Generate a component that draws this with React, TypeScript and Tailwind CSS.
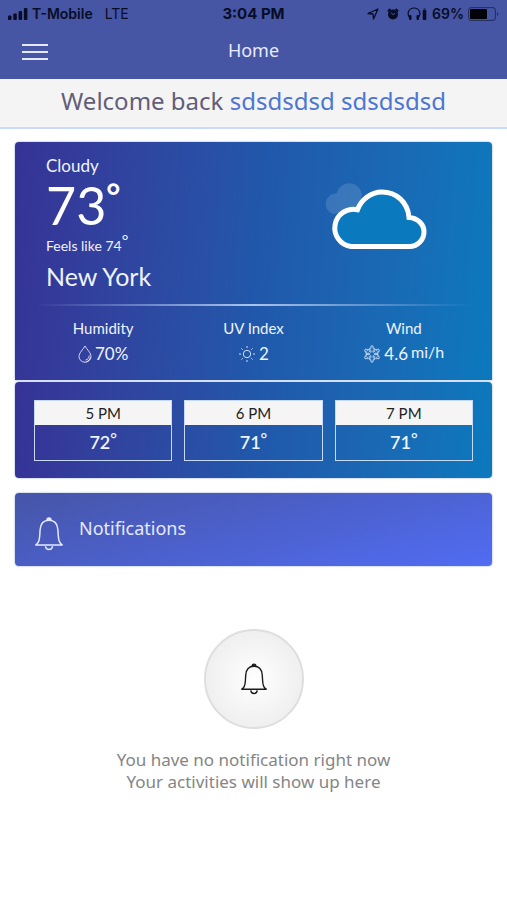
import { useState } from 'react'

type HourForecast = { hour: string; temp: number }

const HOURS: HourForecast[] = [
  { hour: '5 PM', temp: 72 },
  { hour: '6 PM', temp: 71 },
  { hour: '7 PM', temp: 71 },
]

function BellIcon({ className }: { className?: string }) {
  return (
    <svg
      viewBox="0 0 28 34"
      fill="none"
      stroke="currentColor"
      strokeWidth="1.5"
      strokeLinejoin="round"
      className={className}
      aria-hidden="true"
    >
      <path d="M.8 28c2.600-1.500 3.700-4.600 3.900-9.200l.4-6C5.500 6.600 9 3.200 14 3.200s8.500 3.400 8.900 9.600l.4 6c.2 4.600 1.300 7.700 3.900 9.200z" />
      <path d="M10.500 29.300c.2 2 1.600 3.300 3.500 3.300s3.300-1.300 3.500-3.300" />
      <path d="M12 3a2 2 0 0 1 4 0z" fill="currentColor" />
    </svg>
  )
}

function DropIcon() {
  return (
    <svg viewBox="0 0 14 18" fill="none" stroke="currentColor" strokeOpacity="0.85" className="h-[18px] w-[14px]" aria-hidden="true">
      <path d="M7 1C5 4.500 1 8 1 11.500a6 5.700 0 0 0 12 0C13 8 9 4.500 7 1z" />
      <path d="M11.200 10.500c.1 2.400-1.400 4.200-3.700 4.500" />
      <path d="M12.500 12.500c-.7 2.200-2 3.500-4 4.200" />
    </svg>
  )
}

function SunIcon() {
  return (
    <svg viewBox="0 0 18 18" fill="none" stroke="currentColor" strokeOpacity="0.85" className="h-[18px] w-[18px]" aria-hidden="true">
      <circle cx="9" cy="9" r="3.700" />
      <path d="M9 1v2M9 15v2M1 9h2M15 9h2M3.400 3.400l1.300 1.300M13.300 13.300l1.300 1.300M3.400 14.600l1.300-1.300M13.300 4.700l1.300-1.300" />
    </svg>
  )
}

function SnowIcon() {
  const arms = [0, 60, 120, 180, 240, 300]
  return (
    <svg viewBox="0 0 18 18" fill="none" stroke="currentColor" strokeOpacity="0.75" strokeWidth="0.9" className="h-[18px] w-[18px]" aria-hidden="true">
      {arms.map((angle) => (
        <path
          key={angle}
          transform={`rotate(${angle} 9 9)`}
          d="M8 7.300V5.300L6.400 4.200l.6-1.400 1 .6V.9h2v2.500l1-.6.6 1.400L10 5.300v2"
        />
      ))}
    </svg>
  )
}

function CloudIcon() {
  return (
    <svg viewBox="0 0 106 68" className="h-[68px] w-[106px]" aria-hidden="true">
      <path
        d="M10 31A10.500 10.500 0 0 1 13.500 10.500 13 13 0 0 1 39 11l-4 16-8 1z"
        fill="#fff"
        fillOpacity="0.13"
      />
      <path
        d="M28 63.500a18.700 18.700 0 1 1 6.500-36.800C38 17 47.500 9 59 9c14.500 0 26 10.500 27 25.500 9 .5 15 7 15 14.500s-6 14.500-14.500 14.500z"
        fill="#0b79bd"
        stroke="#fff"
        strokeWidth="5"
      />
    </svg>
  )
}

function StatusBar() {
  return (
    <div className="grid h-7 grid-cols-3 items-center px-2 font-['Inter',sans-serif] text-sm text-[#080d25]">
      <div className="flex items-center whitespace-nowrap">
        <svg viewBox="0 0 20 13" fill="currentColor" className="mr-1 h-[13px] w-5" aria-hidden="true">
          <rect x="0" y="7.500" width="3.500" height="4.500" rx="1" />
          <rect x="5.300" y="5.500" width="3.500" height="6.500" rx="1" />
          <rect x="10.600" y="3" width="3.500" height="9" rx="1" />
          <rect x="15.900" y="0" width="3.500" height="12" rx="1" />
        </svg>
        <span className="font-semibold">T-Mobile</span>
        <span className="ml-3">LTE</span>
      </div>
      <span className="text-center text-[15px] font-bold">3:04 PM</span>
      <div className="flex items-center justify-end whitespace-nowrap">
        <svg viewBox="0 0 12 12" fill="none" stroke="currentColor" strokeWidth="1.300" strokeLinejoin="round" className="mr-2 h-3 w-3" aria-hidden="true">
          <path d="M11 1L1 5.500l5 .5.500 5z" />
        </svg>
        <svg viewBox="0 0 12 12" className="mr-2 h-3 w-3" aria-hidden="true">
          <path d="M.8 3.300L3.300.9M11.200 3.300L8.700.9" stroke="currentColor" strokeWidth="1.800" />
          <circle cx="6" cy="6.500" r="5" fill="currentColor" />
          <path d="M3.800 4.500L6 6.700l2-1.500" fill="none" stroke="#4655a4" strokeWidth="1" />
        </svg>
        <svg viewBox="0 0 21 14" className="mr-1 h-[14px] w-[21px]" aria-hidden="true">
          <path d="M3 11.500C-1 6 2 1 7 1s8 5 4 10.500" fill="none" stroke="currentColor" strokeWidth="1.200" />
          <rect x="2" y="8" width="2.500" height="5" rx="1" fill="currentColor" />
          <rect x="9.500" y="8" width="2.500" height="5" rx="1" fill="currentColor" />
          <path d="M16.500 1.500h2v1h-2z" fill="currentColor" />
          <rect x="15.700" y="3" width="3.600" height="10" rx="1" fill="currentColor" />
        </svg>
        <span className="mr-1 font-semibold">69%</span>
        <svg viewBox="0 0 31 14" className="h-[14px] w-[31px]" aria-hidden="true">
          <rect x="0.600" y="0.600" width="26.800" height="12.800" rx="2.500" fill="none" stroke="currentColor" strokeOpacity="0.55" />
          <rect x="2" y="2" width="17" height="10" rx="1" fill="#020308" />
          <path d="M29 5c1.600.7 1.600 3.300 0 4z" fill="currentColor" fillOpacity="0.6" />
        </svg>
      </div>
    </div>
  )
}

function Degree({ value }: { value: number }) {
  return (
    <>
      {value}
      <sup className="-top-[5px] text-base">°</sup>
    </>
  )
}

export default function App() {
  const [menuOpen, setMenuOpen] = useState(false)

  return (
    <div className="min-h-screen bg-white font-['Noto_Sans',sans-serif]">
      {/* Header */}
      <header className="bg-[#4655a4]">
        <StatusBar />
        <div className="grid h-[51px] grid-cols-3 items-start px-5 text-[#e8ebff]">
          <button
            type="button"
            aria-label="Menu"
            aria-expanded={menuOpen}
            onClick={() => setMenuOpen(!menuOpen)}
            className="flex h-12 w-[30px] flex-col items-center justify-center gap-[5px]"
          >
            <span className="h-[2px] w-[26px] bg-[#e4e8fd]" />
            <span className="h-[2px] w-[26px] bg-[#e4e8fd]" />
            <span className="h-[2px] w-[26px] bg-[#e4e8fd]" />
          </button>
          <h1 className="text-center text-lg leading-[44px]">Home</h1>
        </div>
      </header>

      {/* Welcome */}
      <p className="h-[50px] border-b-2 border-[#c9d9fb] bg-[#f4f4f4] text-center text-2xl leading-[43px] text-[#625d78]">
        Welcome back <span className="text-[#4c76d3]">sdsdsdsd sdsdsdsd</span>
      </p>

      <main className="px-[15px] pt-[13px]">
        {/* Weather */}
        <section className="font-['Lato',sans-serif] text-[#eef3ff]">
          <div className="rounded-t-sm bg-linear-95 from-[#363296] via-[#2157aa] to-[#0b79bd] pt-3 shadow-[0_0_2px_#7c93cf]">
            <div className="flex justify-between pr-[63px] pl-[31px]">
              <div>
                <p className="text-[17px] leading-6">Cloudy</p>
                <p className="text-[52px] leading-[54px] text-white">
                  73<sup className="-top-4 text-[34px] font-bold">°</sup>
                </p>
                <p className="text-sm leading-7">
                  Feels like <Degree value={74} />
                </p>
                <p className="text-[25px] leading-8">New York</p>
              </div>
              <div className="pt-[29px]">
                <CloudIcon />
              </div>
            </div>
            <div className="mx-5 mt-3 h-[2px] bg-linear-to-r from-transparent via-[#a9c3ec] to-transparent" />
            <dl className="grid grid-cols-3 gap-3 px-[19px] pt-[10px] pb-3 text-center">
              <div>
                <dt className="text-[15px] leading-6">Humidity</dt>
                <dd className="flex items-center justify-center gap-[3px] text-[17px] leading-7">
                  <DropIcon />
                  70%
                </dd>
              </div>
              <div>
                <dt className="text-[15px] leading-6">UV Index</dt>
                <dd className="flex items-center justify-center gap-[3px] text-[17px] leading-7">
                  <SunIcon />2
                </dd>
              </div>
              <div>
                <dt className="text-[15px] leading-6">Wind</dt>
                <dd className="flex items-center justify-center gap-[3px] text-[17px] leading-7">
                  <SnowIcon />
                  4.6 <span className="pb-1 text-base leading-6">mi/h</span>
                </dd>
              </div>
            </dl>
          </div>
          <div className="mt-[2px] grid grid-cols-3 gap-3 rounded-sm bg-linear-95 from-[#363296] via-[#2157aa] to-[#0b79bd] px-[19px] pt-[18px] pb-[17px] text-center shadow-[0_0_2px_#7c93cf]">
            {HOURS.map((item) => (
              <div key={item.hour} className="border border-[#c8dafa]">
                <p className="bg-[#f5f5f5] text-[15px] leading-6 text-[#222]">{item.hour}</p>
                <p className="text-lg leading-[35px] font-semibold">
                  <Degree value={item.temp} />
                </p>
              </div>
            ))}
          </div>
        </section>

        {/* Notifications */}
        <section>
          <div className="mt-[15px] flex h-[73px] items-center gap-4 rounded-sm bg-linear-165 from-[#4655a8] to-[#516cf3] pl-5 text-[#e4e9ff] shadow-[0_0_2px_#7c93cf]">
            <BellIcon className="mt-2 h-[34px] w-7" />
            <h2 className="pb-1 text-lg leading-8">Notifications</h2>
          </div>

          <div className="flex flex-col items-center pt-[63px]">
            <div className="flex h-[100px] w-[100px] items-center justify-center rounded-full border-2 border-[#dedede] bg-radial from-white to-[#e9e9e9] text-[#1c1c1c]">
              <BellIcon className="h-8 w-[26px]" />
            </div>
            <p className="mt-5 text-center text-[17px] leading-[22px] text-[#858585]">
              You have no notification right now
              <br />
              Your activities will show up here
            </p>
          </div>
        </section>
      </main>
    </div>
  )
}
